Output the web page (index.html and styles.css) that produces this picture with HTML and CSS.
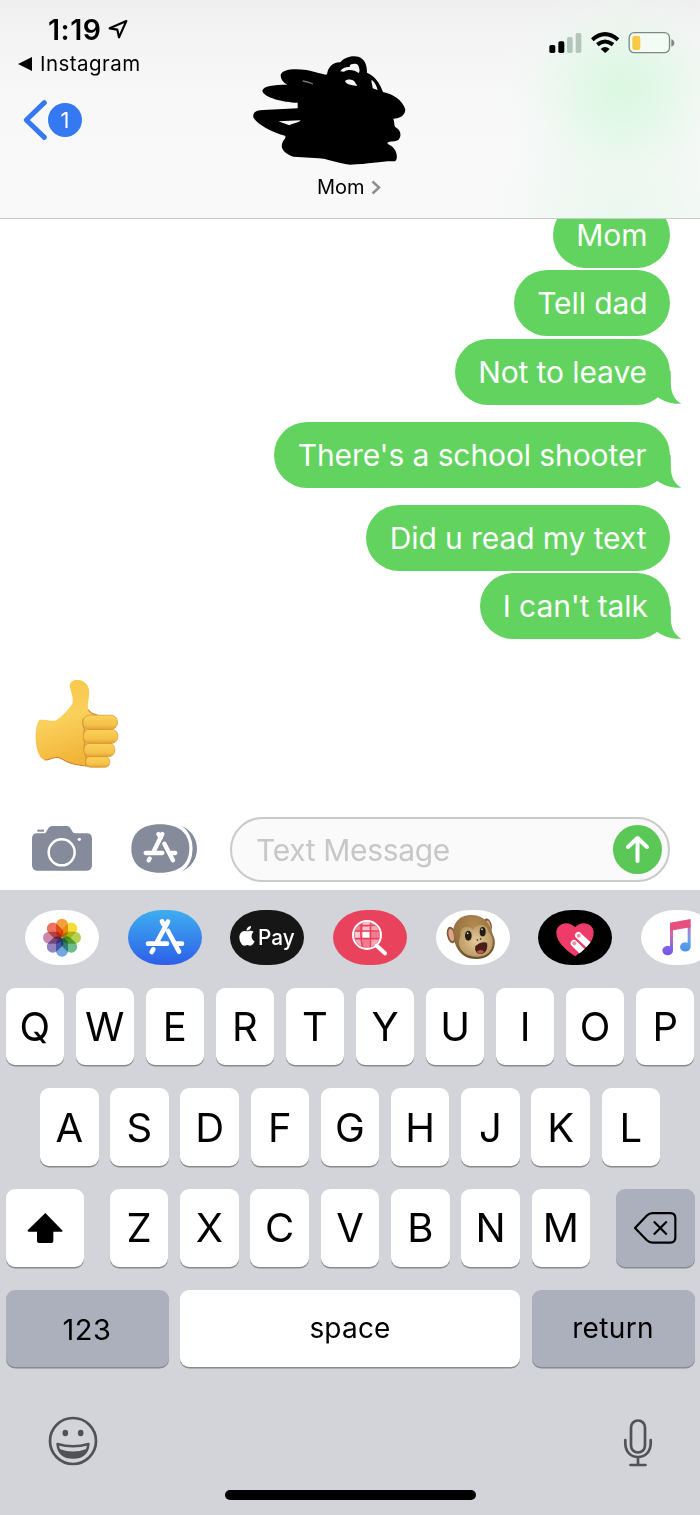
FILE: index.html
```html
<!DOCTYPE html>
<html lang="en">
<head>
<meta charset="utf-8">
<title>Messages</title>
<link rel="stylesheet" href="styles.css">
</head>
<body>
<div class="phone">
  <header class="header">
    <div class="head-left">
      <div class="clock"><span class="time">1:19</span>
        <svg class="loc" width="20" height="20" viewBox="322 57 60 60"><path d="M327 85 L377 63 L355 112 L350 89 Z" fill="none" stroke="#000" stroke-width="6.500" stroke-linejoin="round"/></svg>
      </div>
      <div class="return-app"><svg width="14" height="14" viewBox="0 0 14 14"><path d="M0 7 L14 0 V14Z"/></svg><span>Instagram</span></div>
      <div class="back">
        <svg width="24" height="40" viewBox="70 299 72 120"><path d="M134 307 L80 359 L134 411" fill="none" stroke="#3478f2" stroke-width="15" stroke-linecap="round" stroke-linejoin="round"/></svg>
        <span class="badge">1</span>
      </div>
    </div>
    <div class="head-center">
      <svg class="scribble" width="160" height="112" viewBox="60 45 480 336">
        <path fill-rule="evenodd" d="M152 105 C155 88 190 84 230 90 C260 96 285 106 291 103 C294 82 308 66 331 67 C342 52 365 45 385 50 C405 57 411 75 411 98 C435 108 450 130 459 156 C490 162 517 180 526 208 C526 226 510 236 490 236 C495 250 490 258 500 264 C513 272 515 290 505 300 C495 306 480 303 472 308 C472 314 487 315 495 330 C503 345 502 360 495 364 C460 362 420 372 360 374 C320 370 290 355 265 355 L190 350 C165 342 152 327 156 312 C160 298 170 295 165 287 C120 275 80 250 70 232 C68 215 80 210 100 210 L203 205 L203 188 C160 187 100 172 97 152 C100 138 130 134 172 134 C160 128 152 118 152 105 Z
        M331 94 C336 83 348 81 360 80 C355 72 377 68 383 74 C388 82 391 94 386 99 C372 87 350 88 342 95Z M345 123 C355 116 368 118 374 125 L382 138 C370 136 350 136 345 123Z M425 119 C434 126 440 138 443 150 L428 145 C428 135 423 130 425 119Z M145 244 L212 241 C205 250 188 249 178 256 Z"/>
        <path d="M218 123 Q232 124 249 132" fill="none" stroke="#777" stroke-width="4"/>
      </svg>
      <div class="contact"><span>Mom</span><svg width="10" height="15" viewBox="0 0 10 15"><path d="M1.500 1.500 L8 7.500 L1.500 13.500" fill="none" stroke="#8e8e93" stroke-width="2.500"/></svg></div>
    </div>
    <div class="head-right">
      <svg width="36" height="25" viewBox="146 90 108 75"><rect x="147" y="135" width="18" height="24" rx="5"/><rect x="174" y="124" width="18" height="35" rx="5"/><rect x="200" y="111" width="17" height="48" rx="5" fill="#b4c6bb"/><rect x="226" y="99" width="17" height="60" rx="5" fill="#b4c6bb"/></svg>
      <svg width="40" height="25" viewBox="254 90 120 75"><g fill="none" stroke="#000" stroke-width="12"><path d="M276 119 Q314 86 353 119"/><path d="M291 134 Q314 115 338 134"/></g><path d="M301 147 Q314 135 328 147 L314.500 159Z"/></svg>
      <svg width="50" height="25" viewBox="374 90 150 75"><rect x="386.500" y="98" width="121" height="60" rx="15" fill="#f3fcf4" stroke="#7f8983" stroke-width="4"/><rect x="396" y="107" width="24" height="43" rx="7" fill="#f7ca45"/><path d="M513 118 Q522 121 522 129 Q522 137 513 140Z" fill="#7f8983"/></svg>
    </div>
  </header>

  <main class="thread">
    <div class="bubble w-mom"><span>Mom</span></div>
    <div class="bubble w-dad"><span>Tell dad</span></div>
    <div class="bubble w-leave last"><span>Not to leave</span><svg class="tail" viewBox="640 485 84 100"><path d="M640 485 H690 C691 505 690 520 691 532 C693 552 703 573 722 583 C695 585 670 577 650 563 L640 550Z"/></svg></div>
    <div class="bubble w-school last"><span>There's a school shooter</span><svg class="tail" viewBox="640 485 84 100"><path d="M640 485 H690 C691 505 690 520 691 532 C693 552 703 573 722 583 C695 585 670 577 650 563 L640 550Z"/></svg></div>
    <div class="bubble w-read"><span>Did u read my text</span></div>
    <div class="bubble w-talk last"><span>I can't talk</span><svg class="tail" viewBox="640 485 84 100"><path d="M640 485 H690 C691 505 690 520 691 532 C693 552 703 573 722 583 C695 585 670 577 650 563 L640 550Z"/></svg></div>
    <svg class="thumb" width="88" height="93" viewBox="70 50 264 280">
      <defs>
        <linearGradient id="skin" x1="0" y1="0" x2=".3" y2="1"><stop offset="0" stop-color="#f7c544"/><stop offset=".5" stop-color="#fad05c"/><stop offset="1" stop-color="#f2b437"/></linearGradient>
        <linearGradient id="finger" x1="0" y1="0" x2="0" y2="1"><stop offset="0" stop-color="#fbd25a"/><stop offset=".7" stop-color="#f5c148"/><stop offset="1" stop-color="#e3a234"/></linearGradient>
      </defs>
      <path d="M88 180 C104 175 124 185 138 181 C155 172 180 145 188 130 C192 112 184 96 181 81 C178 62 195 56 212 60 C232 66 240 82 239 100 C238 118 232 135 236 150 C245 162 268 163 280 165 L290 180 L292 300 L298 318 C270 326 225 318 192 312 C172 308 160 297 145 292 C130 291 118 301 104 300 C72 288 72 200 88 180Z" fill="url(#skin)"/>
      <path d="M104 300 C118 301 130 291 145 292 C160 297 172 308 192 312 C215 317 240 320 262 320" fill="none" stroke="#c9792b" stroke-width="3"/>
      <path d="M222 175 Q216 190 225 208 Q218 230 226 247 Q219 270 229 288 L228 316 M236 148 Q242 161 262 164" fill="none" stroke="#d2963a" stroke-width="4"/>
      <g fill="url(#finger)" stroke="#d2963a" stroke-width="2"><rect x="228" y="289" width="73" height="33" rx="16"/><rect x="223" y="249" width="93" height="41" rx="19"/><rect x="221" y="207" width="104" height="43" rx="20"/><rect x="220" y="165" width="104" height="43" rx="20"/></g>
    </svg>
  </main>

  <section class="compose">
    <svg width="64" height="50" viewBox="60 490 192 150" fill="#858b9a"><rect x="82" y="510" width="20" height="6"/><path fill-rule="evenodd" d="M82 521 H103 C112 521 111 500 126 499 H171 C185 500 184 521 195 521 H230 Q246 521 246 537 V616 Q246 633 230 633 H82 Q66 633 66 616 V537 Q66 521 82 521Z"/><circle cx="155" cy="578" r="39" fill="none" stroke="#fff" stroke-width="7.500"/><circle cx="208" cy="539" r="5" fill="#fff"/></svg>
    <svg class="store" width="68" height="50" viewBox="360 490 204 150" fill="#858b9a"><path d="M513 498 C577 522 577 612 513 636 C554 600 554 534 513 498Z"/><path d="M450 494 C508 494 538 522 538 567 C538 612 508 639 450 639 C394 639 364 612 364 567 C364 522 394 494 450 494Z"/><path d="M512 500 C555 530 555 604 512 634" fill="none" stroke="#fff" stroke-width="7"/><g fill="none" stroke="#fff" stroke-width="13" stroke-linecap="round"><path d="M457 523 L430 577 M407 580 H457 M483 580 H496 M445 523 L452 535 M463 552 L489 602 M419 597 L416 602"/></g></svg>
    <div class="field"><span>Text Message</span><button class="send" aria-label="Send"><svg width="49" height="49" viewBox="0 0 49 49"><path d="M24.500 36 V14 M15 22 L24.500 13 L34 22" fill="none" stroke="#fff" stroke-width="4" stroke-linecap="round" stroke-linejoin="round"/></svg></button></div>
  </section>

  <section class="keyboard">
    <div class="apps">
      <div class="app white"><svg viewBox="75 59 222 165"><g class="petals" transform="translate(186 142)">
        <rect x="-18" y="-57" width="36" height="56" rx="18" fill="#f5a03c"/>
        <rect x="-18" y="-57" width="36" height="56" rx="18" fill="#f2dd35" transform="rotate(45)"/>
        <rect x="-18" y="-57" width="36" height="56" rx="18" fill="#b5d254" transform="rotate(90)"/>
        <rect x="-18" y="-57" width="36" height="56" rx="18" fill="#6dbd8c" transform="rotate(135)"/>
        <rect x="-18" y="-57" width="36" height="56" rx="18" fill="#73a7e0" transform="rotate(180)"/>
        <rect x="-18" y="-57" width="36" height="56" rx="18" fill="#9484c0" transform="rotate(225)"/>
        <rect x="-18" y="-57" width="36" height="56" rx="18" fill="#c989ad" transform="rotate(270)"/>
        <rect x="-18" y="-57" width="36" height="56" rx="18" fill="#ec7561" transform="rotate(315)"/></g></svg></div>
      <div class="app blue"><svg viewBox="383 59 222 165"><g fill="none" stroke="#fff" stroke-width="14" stroke-linecap="round"><path d="M503 94 L469 157 M443 160 H500 M527 160 H545 M485 93 L490 103 M503 122 L536 184 M459 177 L454 185"/></g></svg></div>
      <div class="app pay"><svg viewBox="691 59 222 165"><path fill="#fff" d="M742 123 C748 123 754 118 762 124 C754 130 753 147 765 153 C762 160 757 167 750 166 C744 163 741 164 735 166 C724 167 719 148 719 140 C720 124 733 119 742 123Z M741 121 C740 114 746 108 754 107 C755 114 749 121 741 121Z"/><text x="775" y="163" class="pay-text" textLength="110" lengthAdjust="spacingAndGlyphs">Pay</text></svg></div>
      <div class="app red"><svg viewBox="39 59 222 165"><clipPath id="lens"><circle cx="141" cy="134" r="38"/></clipPath><g clip-path="url(#lens)"><rect x="100" y="90" width="80" height="85" fill="#f6a5b3"/><path d="M105 124 H128 V145 H105Z M128 90 H151 V124 H128Z" fill="#f9c6ce"/><rect x="129" y="124" width="21" height="19" fill="#fff"/><path d="M105 100 H128 V122 H102Z M151 124 H180 V143 H151Z M128 147 H148 V175 H128Z" fill="#f07c90"/><path d="M126 90 Q118 134 129 178 M152 90 Q151 134 151 178 M98 122 L182 122 M98 145 H182 M112 104 Q140 108 170 104" stroke="#e8415b" stroke-width="5" fill="none"/></g><circle cx="141" cy="134" r="42" stroke="#fff" stroke-width="6" fill="none"/><path d="M170 166 L195 189" stroke="#fff" stroke-width="12" stroke-linecap="round"/></svg></div>
      <div class="app white"><svg viewBox="348 59 222 165">
        <defs><radialGradient id="fur" cx=".5" cy=".25" r=".75"><stop offset="0" stop-color="#b38a52"/><stop offset=".7" stop-color="#93703f"/><stop offset="1" stop-color="#6c4e2a"/></radialGradient><radialGradient id="face"><stop offset="0" stop-color="#e3c999"/><stop offset="1" stop-color="#bd9c68"/></radialGradient></defs>
        <ellipse cx="394" cy="134" rx="13" ry="25" fill="#7c5a31" transform="rotate(-12 394 134)"/><ellipse cx="394" cy="134" rx="8" ry="19" fill="#dfa38e" transform="rotate(-12 394 134)"/>
        <ellipse cx="503" cy="105" rx="12" ry="21" fill="#7c5a31" transform="rotate(-15 503 105)"/><ellipse cx="505" cy="105" rx="6" ry="15" fill="#dfa38e" transform="rotate(-15 505 105)"/>
        <path d="M401 135 C394 98 421 72 457 74 C493 76 511 100 518 132 C529 150 527 178 508 193 C488 210 452 209 432 196 C414 184 403 164 401 135Z" fill="url(#fur)"/>
        <path d="M422 137 C416 112 442 99 459 118 C474 96 503 101 506 125 C522 143 523 172 505 188 C487 204 452 202 434 189 C418 176 411 157 422 137Z" fill="url(#face)"/>
        <g fill="#241c14"><ellipse cx="445" cy="136" rx="10" ry="15"/><ellipse cx="488" cy="124" rx="9" ry="14"/><circle cx="472" cy="149" r="2.500"/><circle cx="482" cy="146" r="2.500"/></g><g fill="#fff"><circle cx="443" cy="129" r="2.500"/><circle cx="486" cy="117" r="2.500"/></g>
        <path d="M466 168 C476 157 493 152 501 158 C504 173 499 187 485 191 C471 193 463 183 466 168Z" fill="#4b1e1a"/><path d="M470 184 Q482 174 493 184 Q481 196 470 184Z" fill="#b9555a"/>
      </svg></div>
      <div class="app black"><svg viewBox="656 59 222 165"><clipPath id="heart"><path id="h" d="M767 198 C745 182 711 157 711 127 C711 99 747 89 767 111 C787 89 823 99 823 127 C823 157 790 182 767 198Z"/></clipPath><use href="#h" fill="#ee3b67"/><g clip-path="url(#heart)" stroke-linecap="round" fill="none"><path d="M777 135 L826 181 M764 159 L806 200" stroke="#fff" stroke-width="20"/></g><circle cx="778" cy="136" r="6" fill="#f08ba3"/><circle cx="765" cy="159" r="6" fill="#f08ba3"/></svg></div>
      <div class="app white"><svg viewBox="963 59 222 165"><defs><linearGradient id="note" gradientUnits="userSpaceOnUse" x1="1055" y1="100" x2="1040" y2="195"><stop offset="0" stop-color="#ea4d72"/><stop offset=".3" stop-color="#d667ac"/><stop offset=".7" stop-color="#8468e4"/><stop offset="1" stop-color="#7454e7"/></linearGradient><linearGradient id="noteb" gradientUnits="userSpaceOnUse" x1="1108" y1="100" x2="1100" y2="185"><stop offset="0" stop-color="#d66ab5"/><stop offset=".55" stop-color="#6ba2ea"/><stop offset="1" stop-color="#4c8ff0"/></linearGradient></defs><path d="M1050 112 H1059 V181 A16 14 0 1 1 1050 168Z" fill="url(#note)"/><path d="M1103 104 H1112 V170 A16 14 0 1 1 1103 157Z" fill="url(#noteb)"/><path fill="#e5507c" d="M1050 97 L1112 86 V111 L1050 121Z"/></svg></div>
    </div>
    <div class="row">
      <div class="key">Q</div><div class="key">W</div><div class="key">E</div><div class="key">R</div><div class="key">T</div><div class="key">Y</div><div class="key">U</div><div class="key">I</div><div class="key">O</div><div class="key">P</div>
    </div>
    <div class="row middle">
      <div class="key">A</div><div class="key">S</div><div class="key">D</div><div class="key">F</div><div class="key">G</div><div class="key">H</div><div class="key">J</div><div class="key">K</div><div class="key">L</div>
    </div>
    <div class="row">
      <div class="key shift"><svg width="40" height="35" viewBox="75 120 120 105"><path d="M136 129 L188 182 Q188 185 185 185 H160 V214 Q160 219 154 219 H117 Q111 219 111 214 V185 H86 Q82 185 83 181Z"/></svg></div>
      <div class="key">Z</div><div class="key">X</div><div class="key">C</div><div class="key">V</div><div class="key">B</div><div class="key">N</div><div class="key">M</div>
      <div class="key gray delete"><svg width="45" height="34" viewBox="850 122 136 102"><path d="M856 173 L892 135 Q899 128 909 128 H963 Q978 128 978 143 V202 Q978 217 963 217 H909 Q899 217 892 210Z M913 153 L952 193 M952 153 L913 193" fill="none" stroke="#000" stroke-width="6.500" stroke-linejoin="round"/></svg></div>
    </div>
    <div class="row">
      <div class="key gray wide num">123</div><div class="key space">space</div><div class="key gray wide">return</div>
    </div>
    <div class="tools">
      <svg width="50" height="50" viewBox="0 0 50 50"><circle cx="25" cy="25" r="23" fill="none" stroke="#505257" stroke-width="2.700"/><ellipse cx="17.300" cy="17" rx="2.800" ry="3.300" fill="#505257"/><ellipse cx="32.700" cy="17" rx="2.800" ry="3.300" fill="#505257"/><path d="M9.500 28 Q25 32.500 40.500 28 Q39 41.500 25 41.500 Q11 41.500 9.500 28Z" fill="none" stroke="#505257" stroke-width="2.400" stroke-linejoin="round"/><path d="M11.500 33 Q25 38 38.500 33 Q36 41.500 25 41.500 Q14 41.500 11.500 33Z" fill="#505257"/></svg>
      <svg class="mic" width="30" height="50" viewBox="0 0 30 50" fill="none" stroke="#505257" stroke-width="2.700" stroke-linecap="round"><rect x="8" y="2.500" width="14" height="32" rx="7"/><path d="M2.300 22 V25 C2.300 34 8 39 15 39 C22 39 27.700 34 27.700 25 V22 M15 39 V47 M7.500 47 H22.500"/></svg>
    </div>
    <div class="home"></div>
  </section>
</div>
</body>
</html>
```
FILE: styles.css
```css
* { box-sizing: border-box; }
body { margin: 0; background: #fff; color: #000; font-family: Inter, "Liberation Sans", sans-serif; }
svg { display: block; flex: none; }
.phone { width: 700px; height: 1515px; overflow: hidden; display: flex; flex-direction: column; }

.header {
  height: 219px; flex: none; display: grid; grid-template-columns: 250px 160px 290px;
  border-bottom: 1px solid #c9cbca;
  background:
    radial-gradient(ellipse 120px 110px at 622px 92px, rgba(213,248,221,.85), rgba(221,248,227,.65) 40%, rgba(236,248,239,.3) 75%, rgba(240,248,242,0) 100%),
    radial-gradient(ellipse 130px 110px at 620px 215px, rgba(228,247,232,.7), rgba(240,248,242,0) 100%),
    linear-gradient(#efefef, #f4f4f5 40px, #f8f8f9 100px, #f9f9fa);
}
.clock { display: flex; height: 44px; padding: 14px 0 0 48px; align-items: flex-start; }
.time { width: 60px; font-size: 28.500px; font-weight: 600; line-height: 31px; letter-spacing: .5px; }
.loc { margin-top: 5px; }
.return-app { display: flex; align-items: center; height: 40px; padding-left: 18px; gap: 8px; font-size: 20.500px; line-height: 40px; }
.return-app span { letter-spacing: .45px; }
.back { display: flex; align-items: center; height: 40px; margin: 15.500px 0 0 23px; gap: 1px; }
.badge { width: 34px; height: 34px; border-radius: 50%; background: #3478f2; color: #fff; font-size: 22px; line-height: 34px; text-align: center; }
.scribble { margin-top: 55px; }
.contact { display: flex; align-items: center; height: 30px; margin: 5px 0 0 67px; gap: 6px; font-size: 20px; }
.head-right { display: flex; align-items: flex-start; padding: 30px 0 0 138.700px; }

.thread { height: 584px; flex: none; display: flex; flex-direction: column; align-items: flex-end; overflow: hidden; padding-right: 29.700px; }
.bubble { position: relative; flex: none; height: 66px; margin-bottom: 2.300px; border-radius: 33px; background: #61d35e; color: #fff; font-size: 30px; font-weight: 400; line-height: 66px; letter-spacing: -.1px; text-align: center; white-space: nowrap; }
.bubble:first-child { margin-top: -17px; }
.last { margin-bottom: 17.300px; }
.tail { position: absolute; right: -11.200px; bottom: 0; width: 28px; height: 33.300px; fill: #61d35e; }
.w-mom { width: 117px; }
.w-dad { width: 156px; }
.w-leave { width: 215.500px; }
.w-school { width: 396.500px; }
.w-read { width: 304.500px; }
.w-talk { width: 190px; margin-bottom: 37.500px; }
.thumb { align-self: flex-start; margin-left: 33.300px; }

.compose { height: 87px; flex: none; display: flex; align-items: flex-start; padding: 14px 30px 0 30px; }
.compose > svg { margin-top: 6px; }
.store { margin-left: 36px; }
.field { display: flex; align-items: center; justify-content: space-between; width: 440px; height: 65px; margin-left: 32px; padding: 0 6px 0 24px; border: 2px solid #c9cacc; border-radius: 33px; background: #fafafa; color: #c6c7c9; font-size: 30px; letter-spacing: -.35px; }
.send { width: 49px; height: 49px; padding: 0; border: 0; border-radius: 50%; background: #5ac757; }

.keyboard { flex: 1; display: flex; flex-direction: column; background: #d2d4d9; }
.apps { display: flex; gap: 28.700px; height: 97.500px; flex: none; padding: 20px 0 0 25px; overflow: hidden; }
.app { width: 74px; height: 55px; flex: none; border-radius: 34px / 27.500px; }
.app svg { width: 74px; height: 55px; }
.white { background: #fff; }
.blue { background: linear-gradient(#3eaeef, #2e5fe9); }
.pay { background: #161616; }
.red { background: #e9425c; }
.black { background: #000; }
.petals { isolation: isolate; }
.petals rect { mix-blend-mode: multiply; }
.pay-text { fill: #fff; font-size: 66px; font-weight: 500; }
.row { display: flex; justify-content: space-between; height: 77.700px; flex: none; margin: 0 5.500px 23px; }
.middle { margin-left: 40px; margin-right: 40px; }
.key { display: flex; align-items: center; justify-content: center; width: 58.500px; border-radius: 9px; background: #fff; box-shadow: 0 1.500px 0 #898a8d; font-size: 40px; }
.gray { background: #abb0bc; }
.shift { width: 78.500px; margin-right: 14px; }
.delete { width: 78.500px; margin-left: 14px; }
.wide { width: 163px; font-size: 28px; letter-spacing: .35px; }
.space { width: 340.500px; font-size: 28px; letter-spacing: .2px; }
.num { padding-top: 2px; font-size: 29px; letter-spacing: .6px; }
.tools { display: flex; justify-content: space-between; height: 50px; margin: 26px 47px 0 48px; }
.mic { margin-top: 2px; }
.home { width: 251px; height: 10px; margin: 24px auto 0; border-radius: 5px; background: #000; }
```
